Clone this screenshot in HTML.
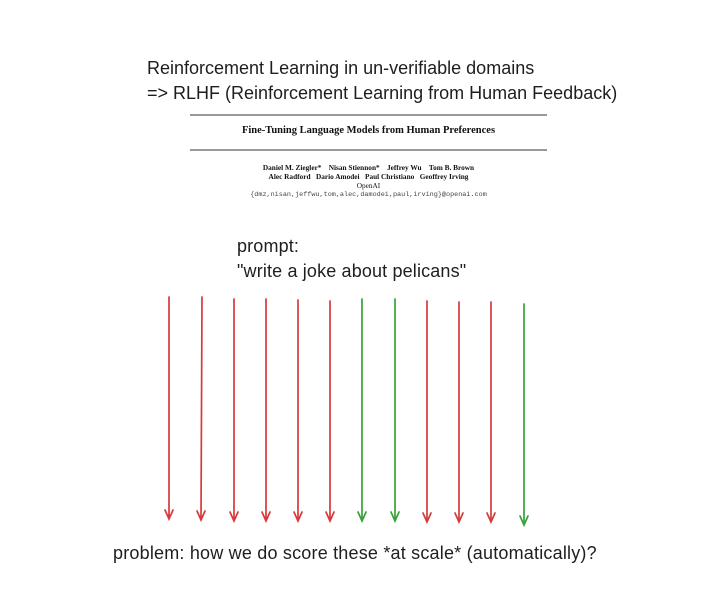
<!DOCTYPE html><html><head><style>
body{margin:0;width:719px;height:595px;background:#fff;position:relative;overflow:hidden;font-family:"Liberation Sans",sans-serif;color:#1e1e1e}
.t{position:absolute;white-space:nowrap}
.s{font-family:"Liberation Serif",serif;color:#111}
</style></head><body>
<div class="t" style="left:147px;top:56px;font-size:18px;line-height:25px">Reinforcement Learning in un-verifiable domains<br>=&gt; RLHF (Reinforcement Learning from Human Feedback)</div>
<div style="position:absolute;left:190px;top:114px;width:357px;height:2px;background:#999"></div>
<div class="t s" style="left:190px;width:357px;text-align:center;top:125px;font-size:10.5px;font-weight:bold">Fine-Tuning Language Models from Human Preferences</div>
<div style="position:absolute;left:190px;top:149px;width:357px;height:2px;background:#999"></div>
<div class="t s" style="left:190px;width:357px;text-align:center;top:163px;font-size:7.3px;line-height:9px;font-weight:bold">Daniel M. Ziegler*&nbsp;&nbsp;&nbsp;&nbsp;Nisan Stiennon*&nbsp;&nbsp;&nbsp;&nbsp;Jeffrey Wu&nbsp;&nbsp;&nbsp;&nbsp;Tom B. Brown<br>Alec Radford&nbsp;&nbsp;&nbsp;Dario Amodei&nbsp;&nbsp;&nbsp;Paul Christiano&nbsp;&nbsp;&nbsp;Geoffrey Irving<br><span style="font-weight:normal">OpenAI</span></div>
<div class="t" style="left:190px;width:357px;text-align:center;top:191px;font-size:6.8px;font-family:'Liberation Mono',monospace;color:#444">{dmz,nisan,jeffwu,tom,alec,damodei,paul,irving}@openai.com</div>
<div class="t" style="left:237px;top:234px;font-size:18px;line-height:25px;letter-spacing:0.15px">prompt:<br>"write a joke about pelicans"</div>
<svg style="position:absolute;left:0;top:0" width="719" height="595">
<g fill="none" stroke-width="1.7" stroke-linecap="round">
<g stroke="#d63a3a">
<path d="M169 297 L169 519 M165 510 L169 519 L173 510"/>
<path d="M202 297 L201 520 M197 511 L201 520 L205 511"/>
<path d="M234 299 L234 521 M230 512 L234 521 L238 512"/>
<path d="M266 299 L266 521 M262 512 L266 521 L270 512"/>
<path d="M298 300 L298 521 M294 512 L298 521 L302 512"/>
<path d="M330 301 L330 521 M326 512 L330 521 L334 512"/>
<path d="M427 301 L427 522 M423 513 L427 522 L431 513"/>
<path d="M459 302 L459 522 M455 513 L459 522 L463 513"/>
<path d="M491 302 L491 522 M487 513 L491 522 L495 513"/>
</g>
<g stroke="#3aa13a">
<path d="M362 299 L362 521 M358 512 L362 521 L366 512"/>
<path d="M395 299 L395 521 M391 512 L395 521 L399 512"/>
<path d="M524 304 L524 525 M520 516 L524 525 L528 516"/>
</g></g></svg>
<div class="t" style="left:113px;top:541px;font-size:18px;line-height:25px;letter-spacing:0.2px">problem: how we do score these *at scale* (automatically)?</div>
</body></html>
